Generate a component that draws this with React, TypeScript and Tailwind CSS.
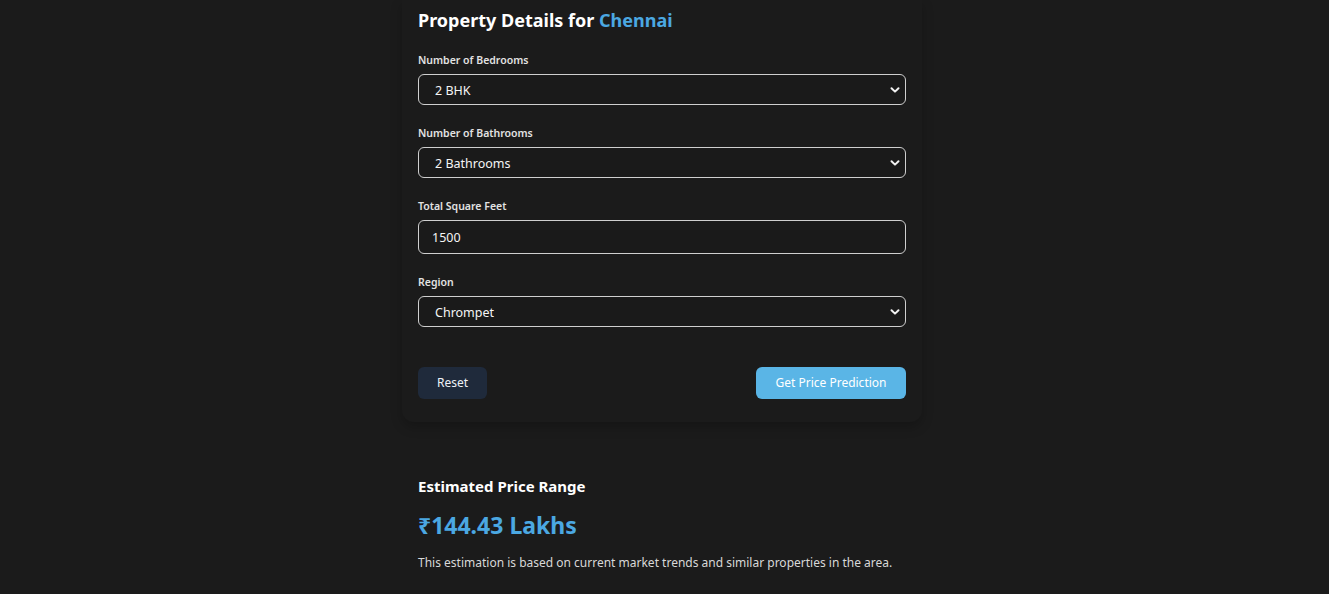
import React from "react";

function Chevron() {
  return (
    <svg className="pointer-events-none absolute right-[6px] top-1/2 -translate-y-1/2" width="10" height="8" viewBox="0 0 10 8" fill="none">
      <path d="M1.5 2.2 L5 5.6 L8.5 2.2" stroke="#f2f2f2" strokeWidth="2" strokeLinecap="round" strokeLinejoin="round" />
    </svg>
  );
}

function SelectField({ label, value, options }: { label: string; value: string; options: string[] }) {
  return (
    <div className="flex flex-col gap-[6px]">
      <label className="text-[10.5px] leading-[16px] font-semibold text-[#e2e2e2]">{label}</label>
      <div className="relative">
        <select
          defaultValue={value}
          className="w-full h-[31px] appearance-none bg-[#1a1a1a] border border-[#cfcfcf] rounded-[6px] pl-[16px] pr-8 pt-[2px] text-[12.5px] leading-[17px] text-[#f5f5f5] outline-none"
        >
          {options.map((o) => (
            <option key={o} value={o}>
              {o}
            </option>
          ))}
        </select>
        <Chevron />
      </div>
    </div>
  );
}

export default function App() {
  return (
    <div
      className="min-h-screen w-full bg-[#1b1b1b] flex flex-col items-center pr-[5px]"
      style={{ fontFamily: '"Noto Sans", "Open Sans", sans-serif' }}
    >
      <div className="w-[520px] rounded-b-xl shadow-[0_5px_12px_rgba(0,0,0,0.22)] px-4 pt-[6px] pb-[23px]">
        <h2 className="text-[18px] leading-[28px] font-bold text-white">
          Property Details for <span className="text-[#4ba8e2]">Chennai</span>
        </h2>
        <div className="mt-[18px] flex flex-col gap-[20px]">
          <SelectField label="Number of Bedrooms" value="2 BHK" options={["1 BHK", "2 BHK", "3 BHK", "4 BHK"]} />
          <SelectField
            label="Number of Bathrooms"
            value="2 Bathrooms"
            options={["1 Bathroom", "2 Bathrooms", "3 Bathrooms"]}
          />
          <div className="flex flex-col gap-[6px]">
            <label className="text-[10.5px] leading-[16px] font-semibold text-[#e2e2e2]">Total Square Feet</label>
            <input
              defaultValue="1500"
              className="w-full h-[34px] bg-[#1a1a1a] border border-[#cfcfcf] rounded-[6px] px-[13px] pt-[1px] text-[12.5px] leading-[16px] text-[#f5f5f5] outline-none"
            />
          </div>
          <SelectField label="Region" value="Chrompet" options={["Chrompet", "Adyar", "Velachery", "Tambaram"]} />
        </div>
        <div className="mt-[40px] flex items-center justify-between">
          <button className="h-[32px] px-[19px] rounded-[6px] bg-[#1f2a3b] text-[12px] text-[#eef2f7]">Reset</button>
          <button className="h-[32px] w-[150px] rounded-[6px] bg-[#5ab5e6] text-[12px] text-white">
            Get Price Prediction
          </button>
        </div>
      </div>
      <div className="w-[520px] px-4 mt-[52px]">
        <h3 className="text-[15px] leading-[24px] font-bold text-white">Estimated Price Range</h3>
        <div className="mt-[12px] text-[23px] leading-[30px] font-bold text-[#4ba8e2]">₹144.43 Lakhs</div>
        <p className="mt-[13px] text-[12px] leading-[20px] text-[#d8d8d8]">
          This estimation is based on current market trends and similar properties in the area.
        </p>
      </div>
    </div>
  );
}
